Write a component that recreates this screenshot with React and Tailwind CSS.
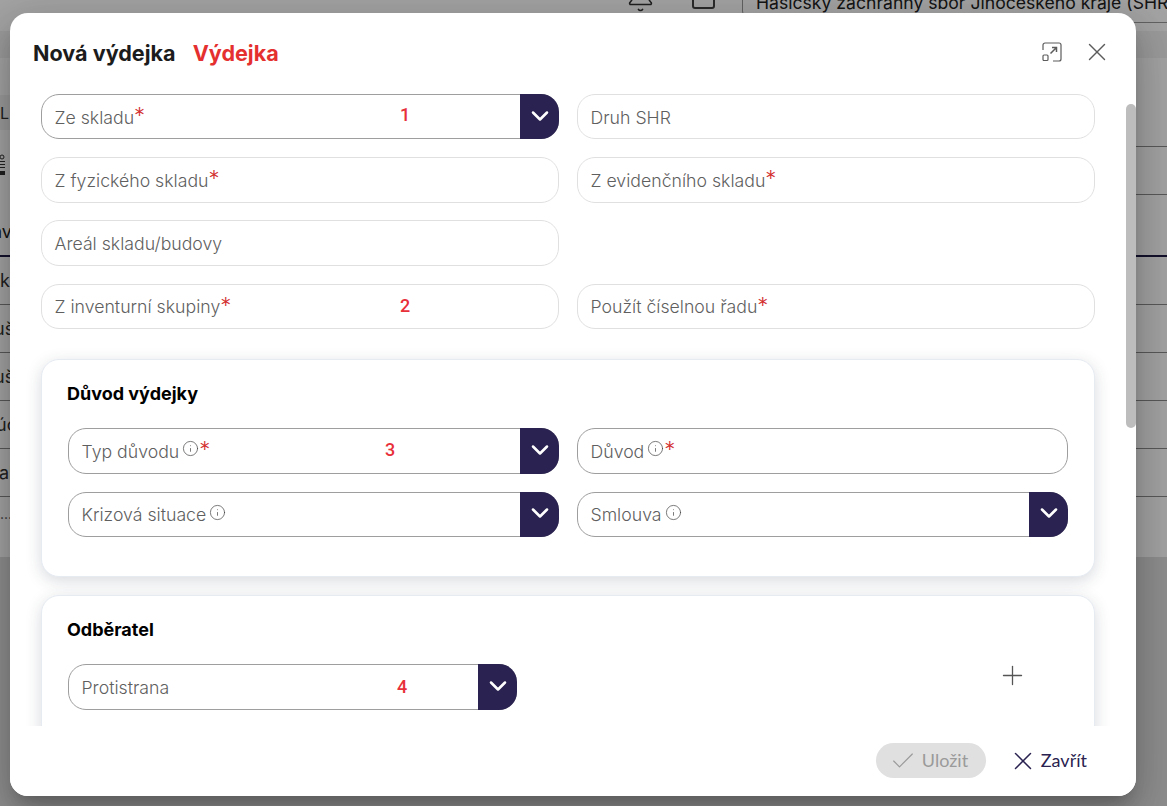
import React from "react";
import { Bell, ChevronDown, Info, Plus, X, Check } from "lucide-react";

const inter = "font-['Inter','Liberation_Sans',sans-serif]";

function Label({ text, info, required }) {
  return (
    <span className="mt-[2px] flex items-start text-[17.7px] leading-[24px] font-light text-[#5f5f5f]">
      <span>{text}</span>
      {info && <Info size={17} strokeWidth={1} className="ml-[3px] mt-[0.5px] text-[#444]" />}
      {required && <span className="text-[22px] leading-[24px] text-[#d32f2f] -mt-[2.5px]">*</span>}
    </span>
  );
}

function Field({ text, info, required, select, active, note, noteLeft, noteTop, className = "" }) {
  return (
    <div className={`relative h-[45.33px] flex items-center rounded-[18px] border bg-white pl-[12.5px] ${active ? "border-[#9e9e9e]" : "border-[#e0e0e0]"} ${className}`}>
      <Label text={text} info={info} required={required} />
      {note && (
        <span style={{ left: noteLeft, top: noteTop }} className="absolute text-[18px] leading-[24px] font-medium text-[#e8303a] font-['Roboto',sans-serif]">{note}</span>
      )}
      {select && (
        <span className="absolute -right-px -top-px -bottom-px w-[39px] rounded-r-[18px] bg-[#2a2250] flex items-center justify-center text-white">
          <ChevronDown size={28} strokeWidth={2.2} className="mb-[2px]" />
        </span>
      )}
    </div>
  );
}

function Card({ title, children, className = "" }) {
  return (
    <section className={`rounded-[18px] border border-[#e6ebf2] bg-white shadow-[0_4px_16px_rgba(40,50,70,0.18)] pl-[26px] pr-[25px] pt-[21px] ${className}`}>
      <h3 className="-ml-px text-[18px] leading-[26px] font-bold text-black">{title}</h3>
      {children}
    </section>
  );
}

function Row({ text, tall, offset }) {
  return (
    <div className={`${tall ? "h-[48.33px]" : "h-[48px]"} border-b border-[#8b8b8b] flex items-center overflow-hidden text-[18px] text-[#333]`}>
      <span className={offset}>{text}</span>
    </div>
  );
}

function Page() {
  return (
    <div className={`absolute inset-0 bg-[#dedede] ${inter} overflow-hidden`}>
      <div className="h-[557px] bg-white">
        <header className="h-[31px] flex items-end pb-[8px] pl-[626px] overflow-hidden text-[#333]">
          <Bell size={29} strokeWidth={1.3} className="shrink-0 mb-[10px]" />
          <span className="ml-[37px] shrink-0 w-[23px] h-[24px] mb-[14px] rounded-[3px] border-2 border-[#444]" />
          <div className="ml-[27px] shrink-0 w-[500px] h-[40px] rounded-l-[12px] border border-[#999] pl-[13px] flex items-center text-[17.6px] whitespace-nowrap text-[#222]">
            Hasičský záchranný sbor Jihočeského kraje (SHR...
          </div>
        </header>
        <div className="h-[27px] bg-[#f3f3f5]" />
        <div className="h-[37px]" />
        <div className="h-[35px] w-[12px] bg-[#f2f2f2] flex items-center text-[16px] text-[#333]">L</div>
        <div className="h-[77px] flex justify-between text-[#333]">
          <svg width="10" height="24" viewBox="0 0 10 24" fill="currentColor" className="mt-[24px]"><circle cx="2" cy="3" r="2" fill="none" stroke="currentColor"/><path d="M0 7h5v1H0zM0 10h5v1H0zM0 13h5v1H0zM0 17h5v4H0z"/></svg>
          <div className="w-[31px]">
            <div className="h-[16.5px] border-b border-[#8b8b8b]" />
            <div className="h-[48px] border-b border-[#8b8b8b]" />
          </div>
        </div>
        <div className="h-[50px] border-b-2 border-[#1f1a45] flex items-center text-[18px] text-[#222] -ml-[8px]">av</div>
        <Row text="k" offset="" />
        <Row text="uš" offset="-ml-[6px]" />
        <Row text="uš" offset="-ml-[6px]" tall />
        <Row text="úc" offset="-ml-[4px]" />
        <Row text="al" offset="-ml-[1px]" />
        <div className="text-[#555] text-[14px] pt-[6px]">...</div>
      </div>
    </div>
  );
}

function App() {
  return (
    <div className={`relative h-[806px] w-full overflow-hidden ${inter}`}>
      <Page />
      <div className="absolute inset-0 bg-black/36" />
      <div className="absolute left-[10px] top-[13px] w-[1126px] h-[783px] flex flex-col rounded-[18px] bg-white overflow-hidden shadow-[0_11px_15px_-7px_rgba(0,0,0,0.2),0_24px_38px_3px_rgba(0,0,0,0.14),0_9px_46px_8px_rgba(0,0,0,0.12)]">
        <div className="relative h-[81px] shrink-0 flex items-start pl-[23px] pr-[24px] pt-[26px]">
          <h2 className="text-[21.6px] leading-[29px] font-bold text-[#1c1c1c]">Nová výdejka</h2>
          <span className="ml-[17px] text-[21.6px] leading-[29px] font-bold text-[#e53030]">Výdejka</span>
          <div className="ml-auto -mt-[2px] flex items-center gap-[20px] text-[#5c5c5c]">
            <svg width="20" height="20" viewBox="0 0 20 20" fill="none" stroke="currentColor" strokeWidth="1.2" className="ml-[1px]">
              <path d="M1 8V3a2 2 0 0 1 2-2h14a2 2 0 0 1 2 2v14a2 2 0 0 1-2 2h-6" />
              <rect x="1" y="13" width="5" height="5.5" rx="1" />
              <path d="M8.5 11.5 14.5 5.5M10 5.5h4.5V10" strokeWidth="1.5" />
            </svg>
            <X size={30} strokeWidth={1.1} />
          </div>
        </div>

        <div className="flex-1 min-h-0 overflow-hidden pl-[31px] pr-[41px]">
          <div className="grid grid-cols-2 gap-x-[18px] gap-y-[17.9px]">
            <Field text="Ze skladu" required select active note="1" noteLeft="358px" noteTop="8px" />
            <Field text="Druh SHR" />
            <Field text="Z fyzického skladu" required />
            <Field text="Z evidenčního skladu" required />
            <Field text="Areál skladu/budovy" />
            <div />
            <Field text="Z inventurní skupiny" required note="2" noteLeft="358px" noteTop="9px" />
            <Field text="Použít číselnou řadu" required />
          </div>

          <Card title="Důvod výdejky" className="mt-[30.3px] h-[218px]">
            <div className="mt-[21px] grid grid-cols-[491px_491px] gap-x-[18px] gap-y-[18px]">
              <Field text="Typ důvodu" info required select active note="3" noteLeft="316px" noteTop="9px" />
              <Field text="Důvod" info required active />
              <Field text="Krizová situace" info select active />
              <Field text="Smlouva" info select active />
            </div>
          </Card>

          <Card title="Odběratel" className="mt-[18px] h-[200px]">
            <div className="mt-[21px] flex items-start">
              <Field text="Protistrana" select active note="4" noteLeft="328px" noteTop="10px" className="w-[449px]" />
              <Plus size={31} strokeWidth={1} className="ml-[480px] -mt-[4px] text-[#555]" />
            </div>
          </Card>
        </div>

        <div className="h-[70px] shrink-0 bg-white flex items-start justify-end pr-[49px] pt-[17px] font-['Lato',sans-serif] text-[18px]">
          <button className="h-[35px] w-[110px] rounded-full bg-[#e0e0e0] text-[#9a9a9a] flex items-center pl-[13.5px] gap-[4.5px]">
            <Check size={28} strokeWidth={1} />
            <span>Uložit</span>
          </button>
          <button className="h-[35px] ml-[22.5px] text-[#2a2250] flex items-center gap-[2.5px]">
            <X size={30} strokeWidth={1.2} />
            <span>Zavřít</span>
          </button>
        </div>

        <div className="absolute right-0 top-[91px] h-[324px] w-[10px] rounded-full bg-[#bdbdbd]" />
      </div>
    </div>
  );
}

export default App;
